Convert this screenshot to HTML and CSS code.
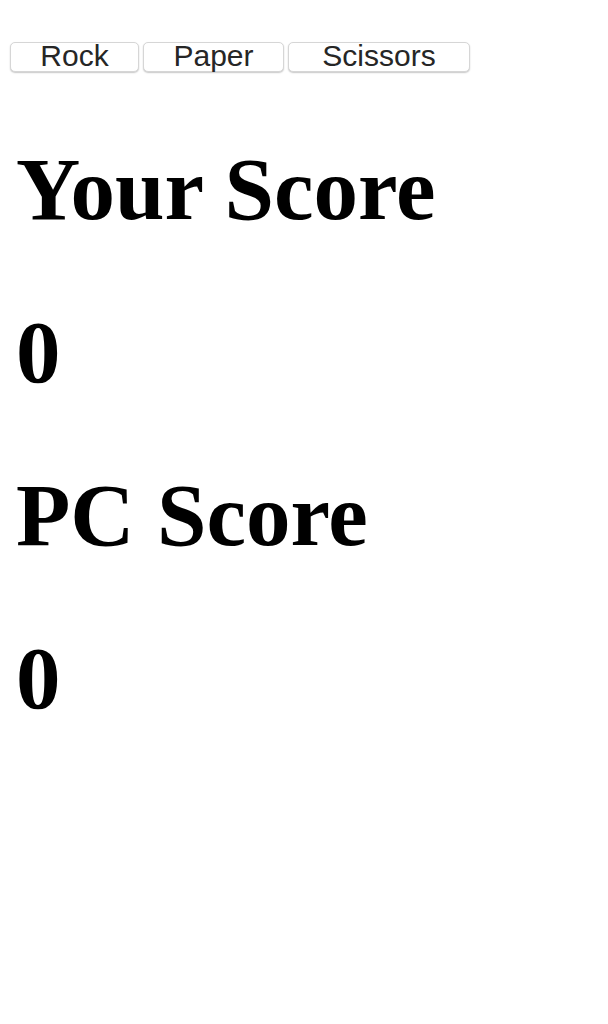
FILE: index.html
```html
<!DOCTYPE html>
<html>
<head>
<meta charset="utf-8">
<title>Rock Paper Scissors</title>
<link rel="stylesheet" href="styles.css">
</head>
<body>
<div class="controls">
  <button class="choice choice-rock">Rock</button>
  <button class="choice choice-paper">Paper</button>
  <button class="choice choice-scissors">Scissors</button>
</div>
<div class="scores">
  <h1 class="score-line">Your Score</h1>
  <h1 class="score-line">0</h1>
  <h1 class="score-line">PC Score</h1>
  <h1 class="score-line">0</h1>
</div>
</body>
</html>
```
FILE: styles.css
```css
html, body {
  margin: 0;
  padding: 0;
  background: #ffffff;
}

body {
  font-family: "Liberation Serif", "Times New Roman", serif;
  color: #000;
}

.controls {
  display: flex;
  gap: 4px;
  padding: 42px 0 0 10px;
}

.choice {
  box-sizing: border-box;
  height: 30px;
  margin: 0;
  padding: 0 0 3px;
  font-family: "Liberation Sans", Arial, sans-serif;
  font-size: 30px;
  line-height: 25px;
  color: #262626;
  background: #ffffff;
  border: 1px solid #d6d6d6;
  border-radius: 5px;
  box-shadow: 0 1px 1.5px rgba(0, 0, 0, 0.22);
}

.choice-rock { width: 129px; }
.choice-paper { width: 141px; }
.choice-scissors { width: 182px; }

.scores {
  display: flex;
  flex-direction: column;
  gap: 59px;
  padding: 65px 0 0 16px;
}

.score-line {
  margin: 0;
  font-size: 89px;
  line-height: 104px;
  font-weight: bold;
}
```
